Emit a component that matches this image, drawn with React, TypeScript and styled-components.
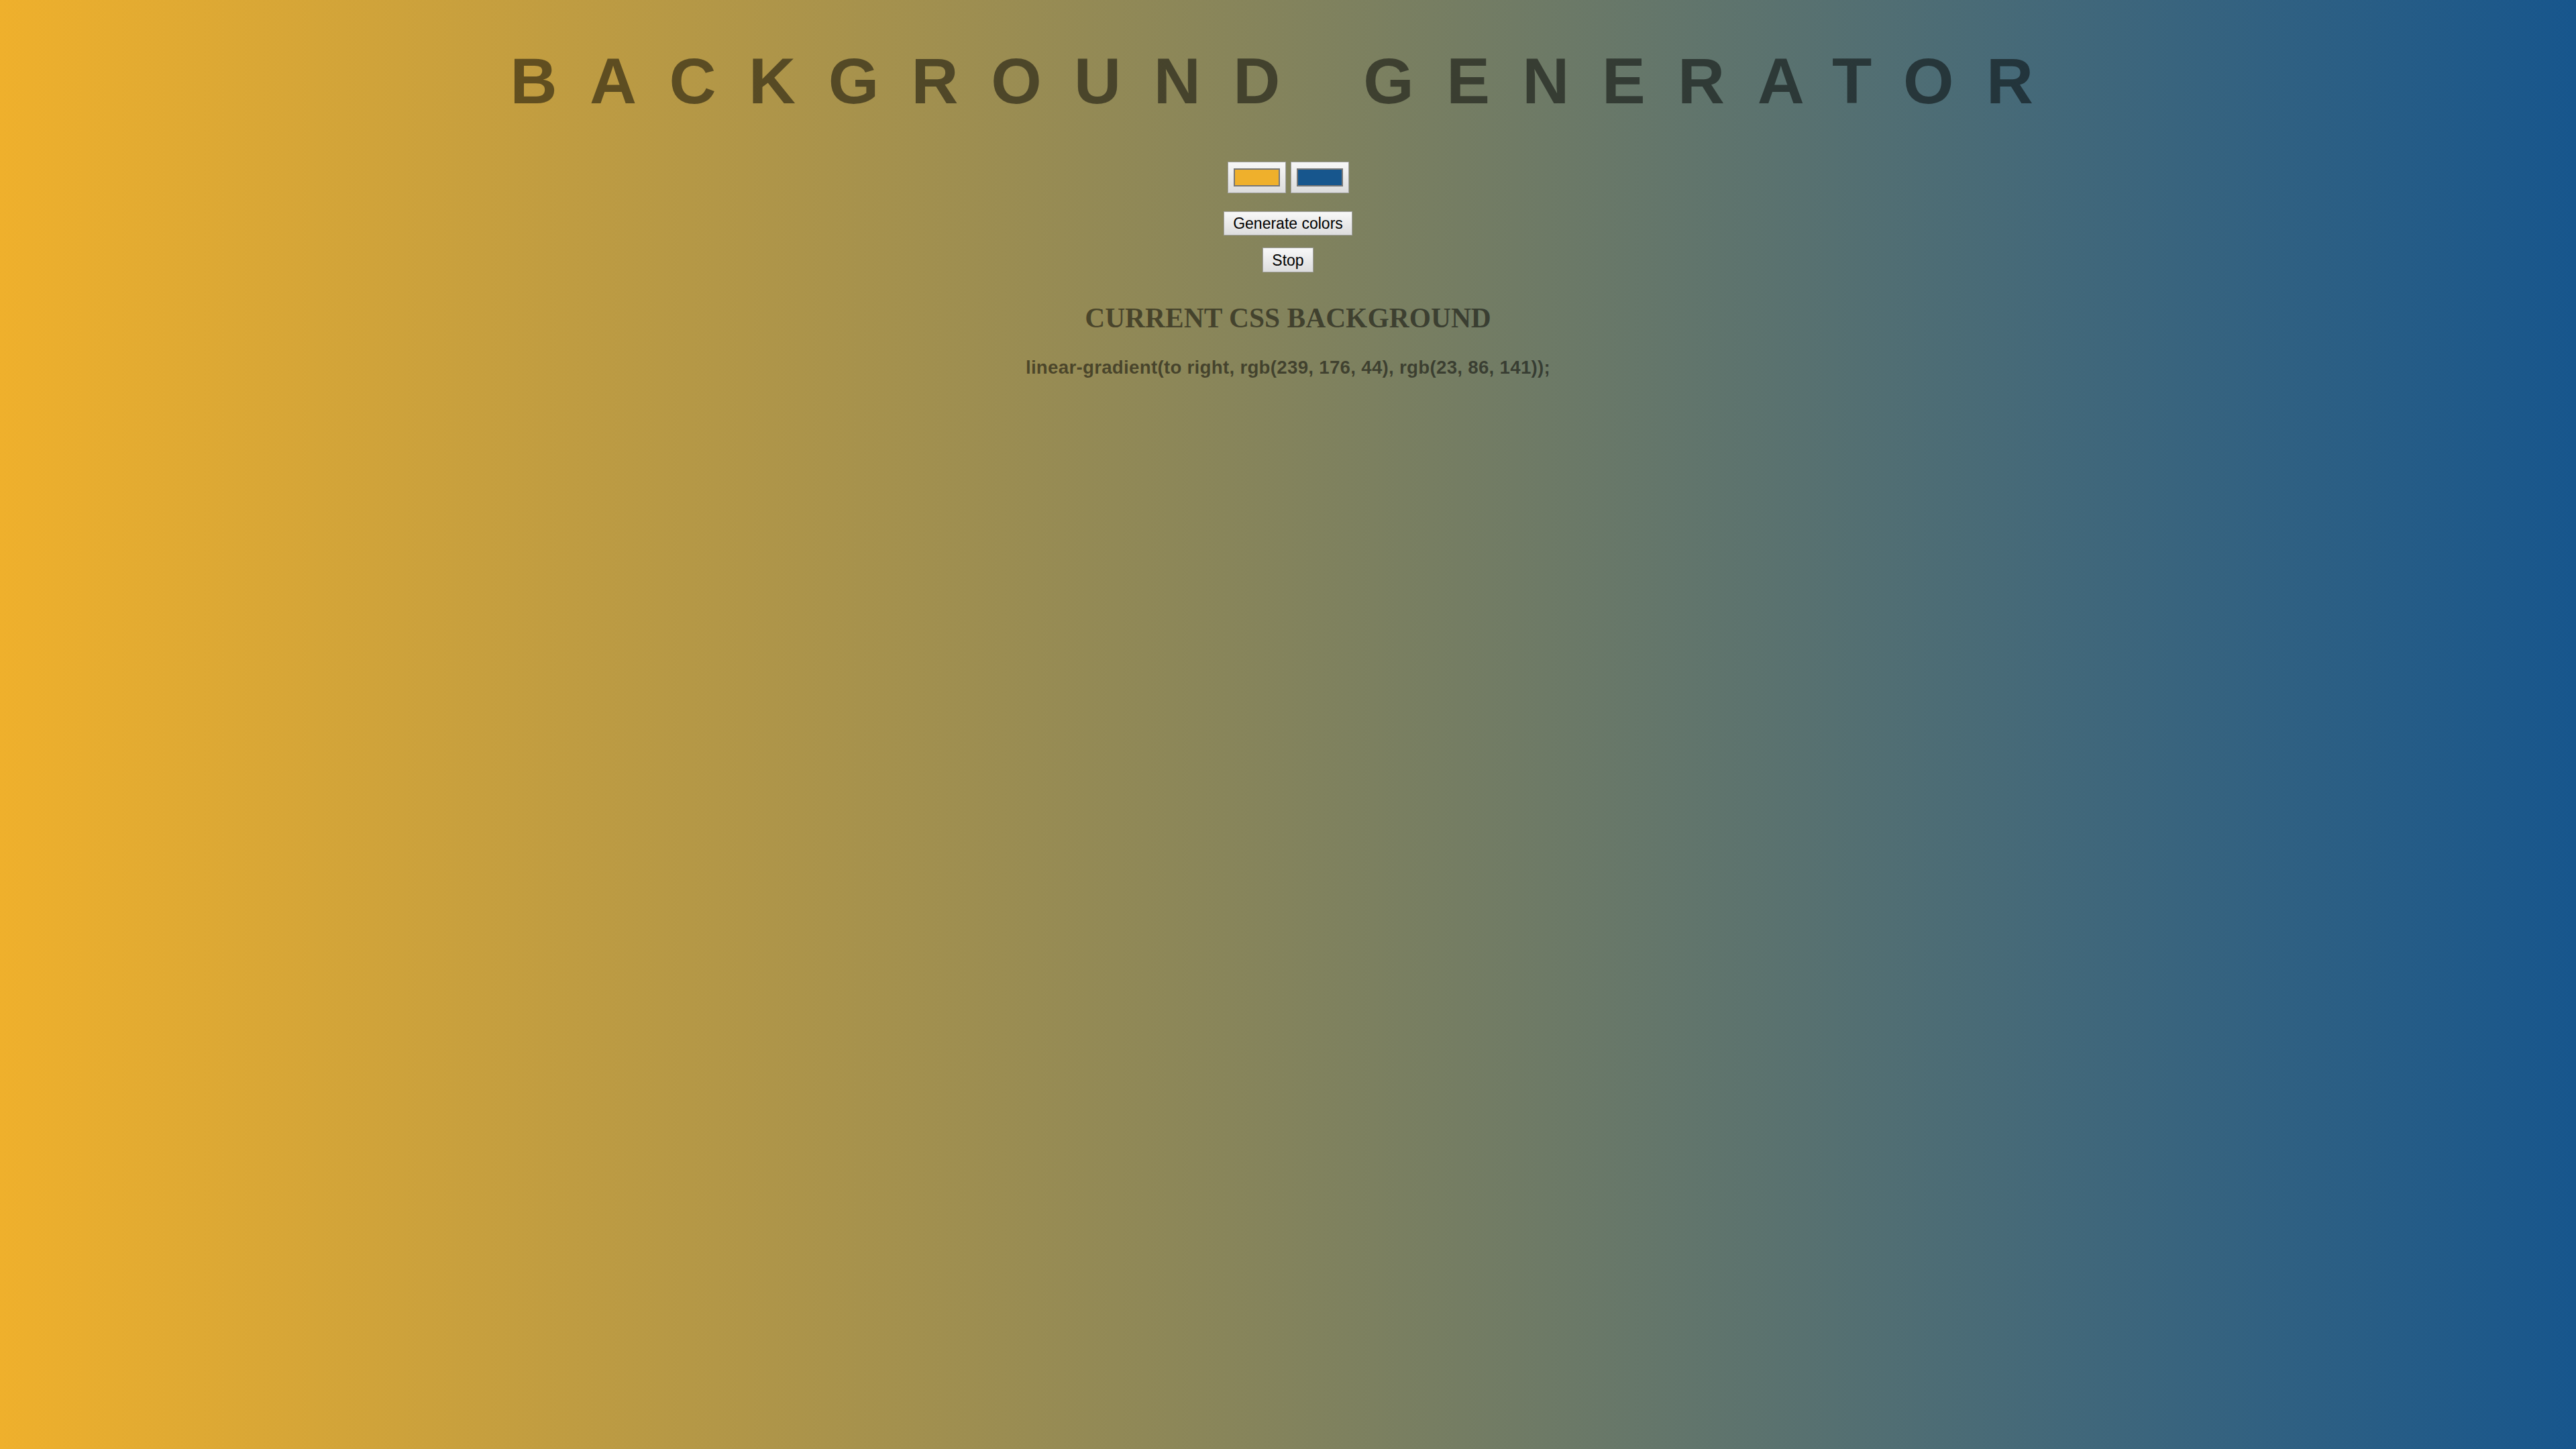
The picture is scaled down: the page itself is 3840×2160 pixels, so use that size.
import React, { useEffect, useRef, useState } from "react";
import styled, { createGlobalStyle } from "styled-components";

const GlobalStyle = createGlobalStyle`
  html, body {
    margin: 0;
    padding: 0;
  }
  body {
    font-family: "Liberation Serif", "Times New Roman", serif;
  }
`;

const Page = styled.div<{ $from: string; $to: string }>`
  min-height: 100vh;
  box-sizing: border-box;
  display: flex;
  flex-direction: column;
  align-items: center;
  text-align: center;
  color: rgba(0, 0, 0, 0.5);
  background: linear-gradient(to right, ${(p) => p.$from}, ${(p) => p.$to});
  padding-top: 1px;
`;

const Title = styled.h1`
  margin: 65px 0 65px;
  font-family: "Liberation Sans", Arial, sans-serif;
  font-weight: 700;
  font-size: 97px;
  line-height: 110px;
  letter-spacing: 48.5px;
  text-transform: uppercase;
  color: rgba(0, 0, 0, 0.5);
`;

const ColorRow = styled.div`
  display: flex;
  gap: 7px;
`;

const ColorInput = styled.input`
  box-sizing: border-box;
  width: 87px;
  height: 47px;
  margin: 0;
  padding: 0;
  border: 1px solid #a3a3a3;
  border-radius: 0;
  background: linear-gradient(to bottom, #f7f7f7, #dcdcdc);
  cursor: pointer;

  &::-webkit-color-swatch-wrapper {
    padding: 9px 8px;
  }
  &::-webkit-color-swatch {
    border: 2px solid #777777;
    border-radius: 0;
  }
`;

const Button = styled.button<{ $gap: number }>`
  margin: ${(p) => p.$gap}px 0 0;
  box-sizing: border-box;
  height: ${(p) => (p.$gap > 20 ? 36 : 37)}px;
  padding: 0 13px;
  font-family: "Liberation Sans", Arial, sans-serif;
  font-size: 23px;
  line-height: 26px;
  color: #000;
  border: 1px solid #a3a3a3;
  border-radius: 0;
  background: linear-gradient(to bottom, #f8f8f8, #dddddd);
  cursor: pointer;
`;

const Heading = styled.h2`
  margin: 44px 0 0;
  font-family: "Liberation Serif", "Times New Roman", serif;
  font-weight: 700;
  font-size: 41.5px;
  line-height: 48px;
  color: rgba(0, 0, 0, 0.5);
`;

const CssText = styled.h3`
  margin: 34px 0 0;
  font-family: "Liberation Sans", Arial, sans-serif;
  font-weight: 700;
  font-size: 27.7px;
  line-height: 32px;
  letter-spacing: 0.01em;
  color: rgba(0, 0, 0, 0.5);
`;

const toHex = (n: number) => n.toString(16).padStart(2, "0");
const rgbToHex = (c: number[]) => "#" + c.map(toHex).join("");
const hexToRgb = (h: string) => [
  parseInt(h.slice(1, 3), 16),
  parseInt(h.slice(3, 5), 16),
  parseInt(h.slice(5, 7), 16),
];
const rgbText = (c: number[]) => `rgb(${c[0]}, ${c[1]}, ${c[2]})`;
const randomColor = () => [0, 0, 0].map(() => Math.floor(Math.random() * 256));

export default function App() {
  const [c1, setC1] = useState<number[]>([239, 176, 44]);
  const [c2, setC2] = useState<number[]>([23, 86, 141]);
  const [running, setRunning] = useState(false);
  const timer = useRef<number | null>(null);

  useEffect(() => {
    if (!running) return;
    timer.current = window.setInterval(() => {
      setC1(randomColor());
      setC2(randomColor());
    }, 1000);
    return () => {
      if (timer.current !== null) window.clearInterval(timer.current);
    };
  }, [running]);

  const from = rgbText(c1);
  const to = rgbText(c2);

  return (
    <>
      <GlobalStyle />
      <Page $from={from} $to={to}>
        <Title>Background Generator</Title>
        <ColorRow>
          <ColorInput
            type="color"
            value={rgbToHex(c1)}
            onChange={(e) => setC1(hexToRgb(e.target.value))}
          />
          <ColorInput
            type="color"
            value={rgbToHex(c2)}
            onChange={(e) => setC2(hexToRgb(e.target.value))}
          />
        </ColorRow>
        <Button $gap={27} onClick={() => setRunning(true)}>
          Generate colors
        </Button>
        <Button $gap={18} onClick={() => setRunning(false)}>
          Stop
        </Button>
        <Heading>CURRENT CSS BACKGROUND</Heading>
        <CssText>{`linear-gradient(to right, ${from}, ${to});`}</CssText>
      </Page>
    </>
  );
}
